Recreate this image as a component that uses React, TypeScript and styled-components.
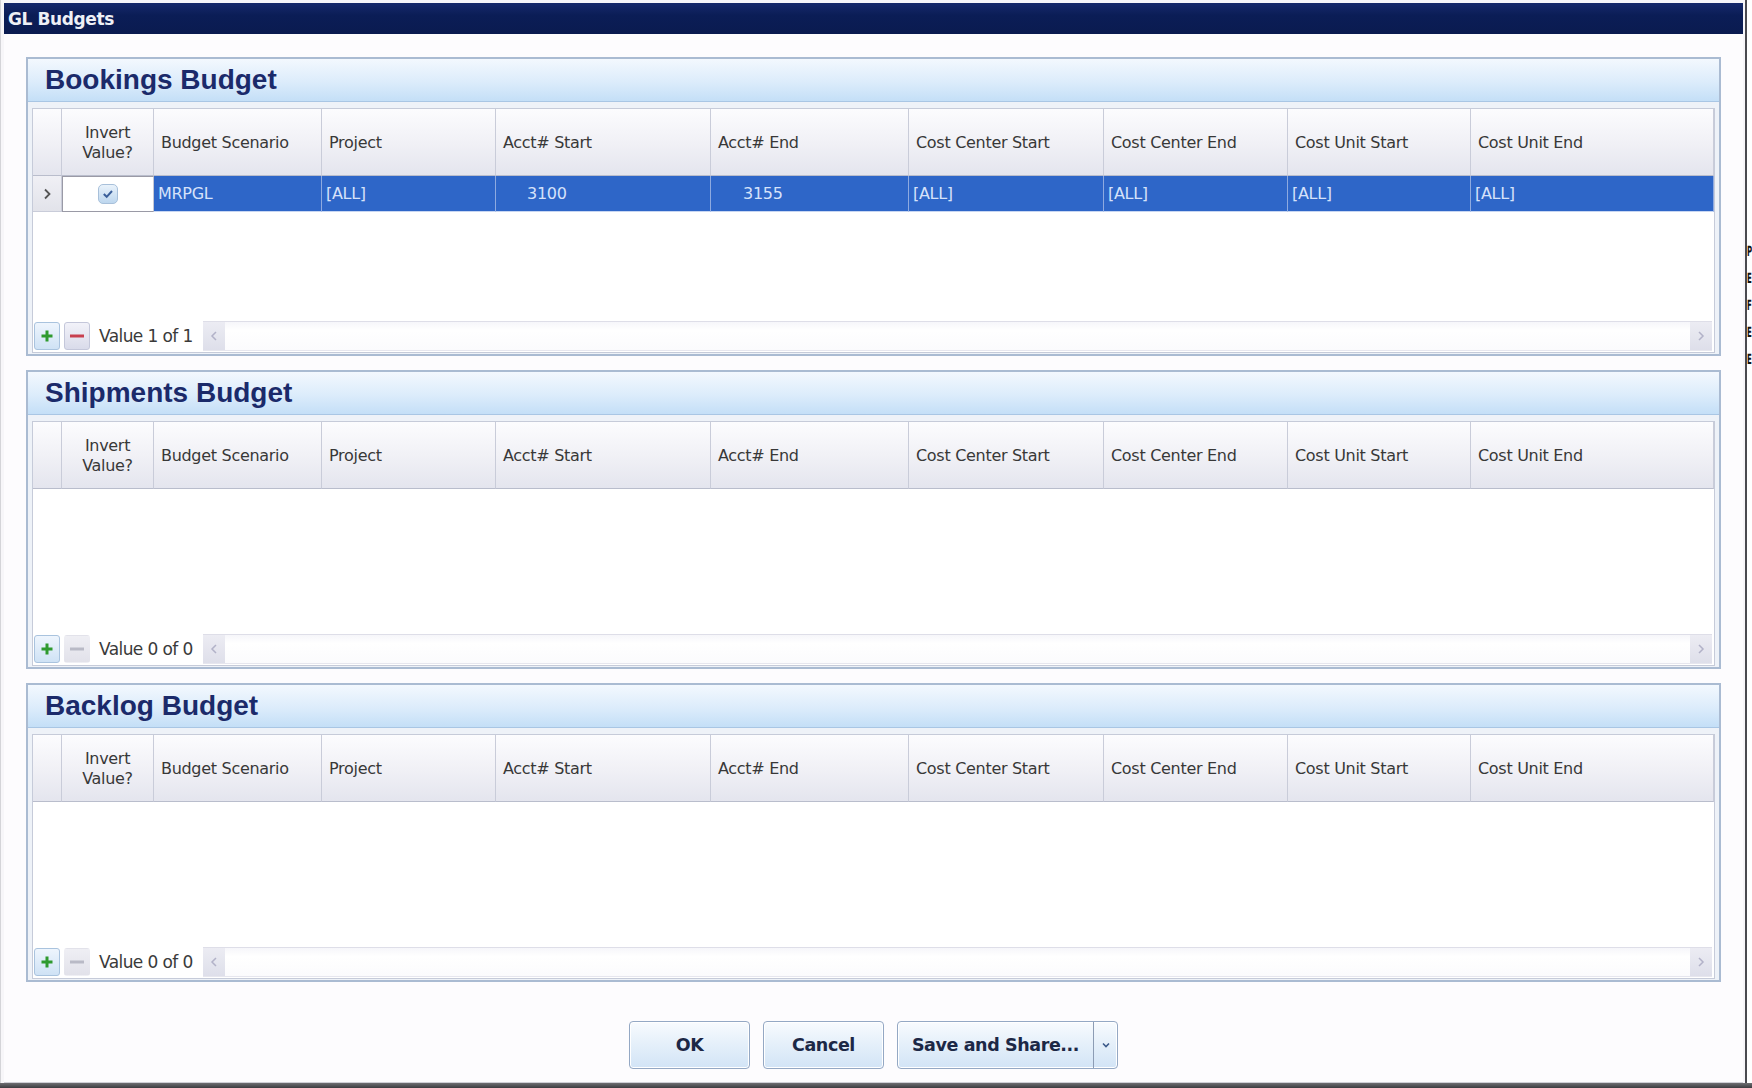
import * as React from 'react';
import styled, { createGlobalStyle } from 'styled-components';

const GlobalStyle = createGlobalStyle`
  html, body {
    margin: 0;
    padding: 0;
    background: #f2f2f4;
  }
  body {
    font-family: "DejaVu Sans", Verdana, sans-serif;
  }
`;

const Page = styled.div`
  width: 1752px;
  height: 1088px;
  display: flex;
  flex-direction: column;
  overflow: hidden;
`;

const Desktop = styled.div`
  flex: 1;
  display: flex;
`;

const DesktopEdge = styled.div`
  height: 5px;
  flex: none;
  background: linear-gradient(#6e6e72, #3c3c40);
`;

const Window = styled.div`
  width: 1745px;
  box-sizing: border-box;
  padding: 3px 2px 0 3px;
  display: flex;
  flex-direction: column;
  background: #f7f6f9;
  border-left: 1px solid #d4d4d8;
`;

const Dialog = styled.div`
  flex: 1;
  display: flex;
  flex-direction: column;
  background: #fdfcfe;
  border-bottom: 1px solid #cfcfd6;
`;

const TitleBar = styled.div`
  height: 31px;
  flex: none;
  display: flex;
  align-items: center;
  padding-left: 4px;
  background: linear-gradient(#16296b, #0b1d56 40%, #0a1b50);
  color: #eef0f6;
  font: bold 17px "DejaVu Sans", Verdana, sans-serif;
  letter-spacing: -0.4px;
`;

const Content = styled.div`
  flex: 1;
  display: flex;
  flex-direction: column;
  padding: 23px 22px 0 22px;
`;

const Panels = styled.div`
  display: flex;
  flex-direction: column;
  gap: 14px;
`;

const Panel = styled.section`
  height: 299px;
  box-sizing: border-box;
  border: 2px solid #aabbd2;
  display: flex;
  flex-direction: column;
  background: #eef2f8;
`;

const PanelHeader = styled.div`
  height: 43px;
  flex: none;
  box-sizing: border-box;
  display: flex;
  align-items: center;
  padding-left: 17px;
  background: linear-gradient(#f3f8fe, #dcecfb 55%, #c4dff7);
  border-bottom: 1px solid #a9c6e4;
  color: #1b2a6a;
  font: bold 28px "Liberation Sans", Arial, sans-serif;
`;

const PanelBody = styled.div`
  flex: 1;
  display: flex;
  flex-direction: column;
  padding: 6px 4px 1px 4px;
`;

const GridBox = styled.div`
  flex: 1;
  display: flex;
  flex-direction: column;
  background: #ffffff;
  border: 1px solid #c6cbd9;
`;

const columns = '29px 92px 168px 174px 215px 198px 195px 184px 183px 1fr';

const HeaderRow = styled.div`
  height: 67px;
  flex: none;
  display: grid;
  grid-template-columns: ${columns};
`;

const HeaderCell = styled.div<{ $center?: boolean }>`
  display: flex;
  align-items: center;
  justify-content: ${({ $center }) => ($center ? 'center' : 'flex-start')};
  text-align: ${({ $center }) => ($center ? 'center' : 'left')};
  padding: 2px ${({ $center }) => ($center ? '0' : '7px')} 0;
  box-sizing: border-box;
  background: linear-gradient(#fcfcfe, #f1f1f6 50%, #e4e5ee);
  border-right: 1px solid #c9ccd9;
  border-bottom: 1px solid #b9bdcc;
  color: #383838;
  font-size: 16px;
  line-height: 20px;
  letter-spacing: -0.3px;
`;

const DataRow = styled.div`
  height: 36px;
  flex: none;
  display: grid;
  grid-template-columns: ${columns};
`;

const IndicatorCell = styled.div`
  display: flex;
  align-items: center;
  justify-content: center;
  background: linear-gradient(#f0f0f5, #e2e3ea);
  border-right: 1px solid #c9ccd9;
  border-bottom: 1px solid #c9ccd9;
`;

const CheckCell = styled.div`
  display: flex;
  align-items: center;
  justify-content: center;
  background: #ffffff;
  border: 1px solid #9a9aa6;
  border-right-color: #c4c7d4;
`;

const ValueCell = styled.div<{ $indent?: number }>`
  display: flex;
  align-items: center;
  padding-left: ${({ $indent }) => $indent ?? 4}px;
  background: #2e66c8;
  border-right: 1px solid #8eaae0;
  border-bottom: 1px solid #c7d6f2;
  color: #d6e2fa;
  font-size: 16px;
  letter-spacing: -0.3px;
`;

const GridEmpty = styled.div`
  flex: 1;
`;

const Footer = styled.div`
  height: 32px;
  flex: none;
  display: flex;
  align-items: center;
  gap: 4px;
  padding-left: 1px;
`;

const NavButton = styled.div<{ $kind: 'add' | 'remove' | 'off' }>`
  width: 26px;
  height: 28px;
  box-sizing: border-box;
  display: flex;
  align-items: center;
  justify-content: center;
  border-radius: 3px;
  border: 1px solid
    ${({ $kind }) => ($kind === 'add' ? '#a9c3de' : $kind === 'remove' ? '#c4c7da' : 'transparent')};
  background: ${({ $kind }) =>
    $kind === 'add'
      ? 'linear-gradient(#eef5fd, #cfe2f5)'
      : $kind === 'remove'
      ? 'linear-gradient(#f2f2f9, #d9dbea)'
      : 'linear-gradient(#efeff4, #e2e2ea)'};
`;

const NavLabel = styled.span`
  padding: 0 6px 0 5px;
  color: #3a3a3a;
  font-size: 17px;
  letter-spacing: -0.6px;
  white-space: nowrap;
`;

const ScrollTrack = styled.div`
  flex: 1;
  height: 28px;
  display: flex;
  align-items: stretch;
  background: linear-gradient(#f6f6fa, #ffffff 30%, #fbfbfd);
  border-top: 1px solid #dedee8;
  border-bottom: 1px solid #e6e6ee;
  margin-right: 2px;
`;

const ScrollArrow = styled.div`
  width: 22px;
  display: flex;
  align-items: center;
  justify-content: center;
  background: linear-gradient(#ececf3, #dedfea);
`;

const ScrollSpace = styled.div`
  flex: 1;
`;

const ButtonRow = styled.div`
  margin-top: 39px;
  display: flex;
  justify-content: center;
  gap: 13px;
`;

const DialogButton = styled.button<{ $width: number }>`
  width: ${({ $width }) => $width}px;
  height: 48px;
  box-sizing: border-box;
  border: 1px solid #94a8c4;
  border-radius: 4px;
  background: linear-gradient(#f8fbfe, #e6f0fa 45%, #d2e4f6);
  color: #1c2846;
  font: bold 17.5px "DejaVu Sans", Verdana, sans-serif;
  letter-spacing: -0.4px;
  padding: 0;
  display: flex;
  align-items: stretch;
  box-shadow: inset 0 0 0 1px #ffffff;
`;

const ButtonMain = styled.span`
  flex: 1;
  display: flex;
  align-items: center;
  justify-content: center;
`;

const ButtonDrop = styled.span`
  width: 23px;
  flex: none;
  display: flex;
  align-items: center;
  justify-content: center;
  border-left: 1px solid #8c9cb4;
`;

const RightStrip = styled.div`
  flex: 1;
  background: #ffffff;
  border-left: 2px solid #4a4a50;
  display: flex;
  flex-direction: column;
  overflow: hidden;
  padding-top: 244px;
`;

const StripLetter = styled.span`
  display: block;
  height: 27px;
  font: bold 7px "DejaVu Sans", sans-serif;
  color: #111;
  transform: scaleY(2);
  transform-origin: top left;
`;

const Chevron = () => (
  <svg width="10" height="14" viewBox="0 0 10 14">
    <path d="M3 2.5 L7.5 7 L3 11.5" fill="none" stroke="#555" strokeWidth="1.8" />
  </svg>
);

const CheckBox = () => (
  <svg width="20" height="20" viewBox="0 0 20 20">
    <defs>
      <linearGradient id="cb" x1="0" y1="0" x2="0" y2="1">
        <stop offset="0" stopColor="#eaf3fb" />
        <stop offset="1" stopColor="#bcd6ee" />
      </linearGradient>
    </defs>
    <rect x="0.5" y="0.5" width="19" height="19" rx="4.5" fill="url(#cb)" stroke="#a8c0da" />
    <path d="M5.8 10 L8.7 12.8 L14 7" fill="none" stroke="#3b5f9a" strokeWidth="2" />
  </svg>
);

const PlusIcon = () => (
  <svg width="14" height="14" viewBox="0 0 14 14">
    <path d="M7 1.5 V12.5 M1.5 7 H12.5" stroke="#2f9a2f" strokeWidth="3" />
  </svg>
);

const MinusIcon = ({ off }: { off?: boolean }) => (
  <svg width="16" height="6" viewBox="0 0 16 6">
    <path d="M1 3 H15" stroke={off ? '#b9bac6' : '#c8404f'} strokeWidth="3" />
  </svg>
);

const ArrowGlyph = ({ dir }: { dir: 'left' | 'right' }) => (
  <svg width="10" height="12" viewBox="0 0 10 12">
    <path
      d={dir === 'left' ? 'M7 2 L3 6 L7 10' : 'M3 2 L7 6 L3 10'}
      fill="none"
      stroke="#b2b2c8"
      strokeWidth="1.5"
    />
  </svg>
);

const DropArrow = () => (
  <svg width="10" height="8" viewBox="0 0 10 8">
    <path d="M2 2.5 L5 5.5 L8 2.5" fill="none" stroke="#3c5a8a" strokeWidth="1.6" />
  </svg>
);

const headers = [
  'Budget Scenario',
  'Project',
  'Acct# Start',
  'Acct# End',
  'Cost Center Start',
  'Cost Center End',
  'Cost Unit Start',
  'Cost Unit End',
];

interface Row {
  scenario: string;
  project: string;
  acctStart: string;
  acctEnd: string;
  ccStart: string;
  ccEnd: string;
  cuStart: string;
  cuEnd: string;
}

interface BudgetProps {
  title: string;
  rows: Row[];
}

const BudgetPanel: React.FC<BudgetProps> = ({ title, rows }) => {
  const count = rows.length;
  return (
    <Panel>
      <PanelHeader>{title}</PanelHeader>
      <PanelBody>
        <GridBox>
          <HeaderRow>
            <HeaderCell />
            <HeaderCell $center>
              Invert
              <br />
              Value?
            </HeaderCell>
            {headers.map((h) => (
              <HeaderCell key={h}>{h}</HeaderCell>
            ))}
          </HeaderRow>
          {rows.map((r, i) => (
            <DataRow key={i}>
              <IndicatorCell>
                <Chevron />
              </IndicatorCell>
              <CheckCell>
                <CheckBox />
              </CheckCell>
              <ValueCell>{r.scenario}</ValueCell>
              <ValueCell>{r.project}</ValueCell>
              <ValueCell $indent={31}>{r.acctStart}</ValueCell>
              <ValueCell $indent={32}>{r.acctEnd}</ValueCell>
              <ValueCell>{r.ccStart}</ValueCell>
              <ValueCell>{r.ccEnd}</ValueCell>
              <ValueCell>{r.cuStart}</ValueCell>
              <ValueCell>{r.cuEnd}</ValueCell>
            </DataRow>
          ))}
          <GridEmpty />
          <Footer>
            <NavButton $kind="add">
              <PlusIcon />
            </NavButton>
            <NavButton $kind={count > 0 ? 'remove' : 'off'}>
              <MinusIcon off={count === 0} />
            </NavButton>
            <NavLabel>
              Value {count} of {count}
            </NavLabel>
            <ScrollTrack>
              <ScrollArrow>
                <ArrowGlyph dir="left" />
              </ScrollArrow>
              <ScrollSpace />
              <ScrollArrow>
                <ArrowGlyph dir="right" />
              </ScrollArrow>
            </ScrollTrack>
          </Footer>
        </GridBox>
      </PanelBody>
    </Panel>
  );
};

const bookings: Row[] = [
  {
    scenario: 'MRPGL',
    project: '[ALL]',
    acctStart: '3100',
    acctEnd: '3155',
    ccStart: '[ALL]',
    ccEnd: '[ALL]',
    cuStart: '[ALL]',
    cuEnd: '[ALL]',
  },
];

export default function App() {
  return (
    <>
      <GlobalStyle />
      <Page>
        <Desktop>
          <Window>
            <Dialog>
              <TitleBar>GL Budgets</TitleBar>
              <Content>
                <Panels>
                  <BudgetPanel title="Bookings Budget" rows={bookings} />
                  <BudgetPanel title="Shipments Budget" rows={[]} />
                  <BudgetPanel title="Backlog Budget" rows={[]} />
                </Panels>
                <ButtonRow>
                  <DialogButton $width={121}>
                    <ButtonMain>OK</ButtonMain>
                  </DialogButton>
                  <DialogButton $width={121}>
                    <ButtonMain>Cancel</ButtonMain>
                  </DialogButton>
                  <DialogButton $width={221}>
                    <ButtonMain>Save and Share...</ButtonMain>
                    <ButtonDrop>
                      <DropArrow />
                    </ButtonDrop>
                  </DialogButton>
                </ButtonRow>
              </Content>
            </Dialog>
          </Window>
          <RightStrip>
            {['P', 'E', 'F', 'E', 'E'].map((l, i) => (
              <StripLetter key={i}>{l}</StripLetter>
            ))}
          </RightStrip>
        </Desktop>
        <DesktopEdge />
      </Page>
    </>
  );
}
